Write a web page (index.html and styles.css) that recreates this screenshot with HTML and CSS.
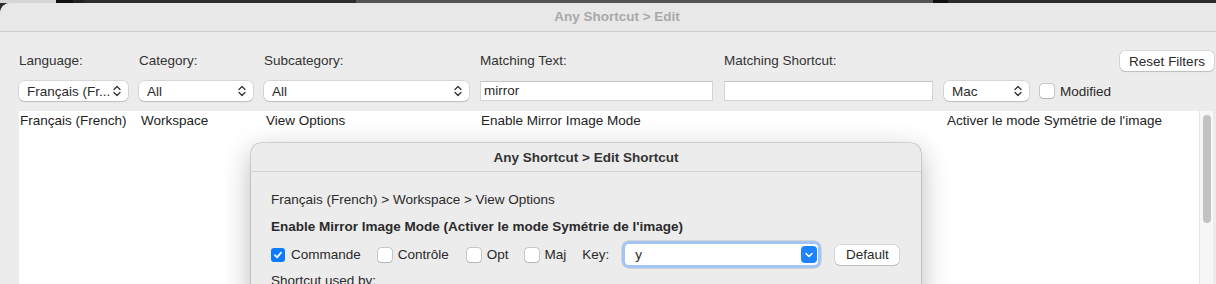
FILE: index.html
```html
<!DOCTYPE html>
<html lang="fr">
<head>
  <meta charset="UTF-8" />
  <title>Any Shortcut &gt; Edit</title>
  <link rel="stylesheet" href="styles.css">
</head>
<body>
  <div class="desktop"></div>

  <div class="window">
    <div class="titlebar">Any Shortcut &gt; Edit</div>

    <div class="filters">
      <div class="row labels">
        <span class="w-lang">Language:</span>
        <span class="w-cat">Category:</span>
        <span class="w-sub">Subcategory:</span>
        <span class="w-text">Matching Text:</span>
        <span class="w-short">Matching Shortcut:</span>
        <button class="btn reset">Reset Filters</button>
      </div>
      <div class="row controls">
        <div class="select w-lang"><span>Français (Fr...</span><svg class="updown" width="8" height="12" viewBox="0 0 8 12"><path d="M1 4.5 4 1.5 7 4.5M1 7.5 4 10.5 7 7.5"/></svg></div>
        <div class="select w-cat"><span>All</span><svg class="updown" width="8" height="12" viewBox="0 0 8 12"><path d="M1 4.5 4 1.5 7 4.5M1 7.5 4 10.5 7 7.5"/></svg></div>
        <div class="select w-sub"><span>All</span><svg class="updown" width="8" height="12" viewBox="0 0 8 12"><path d="M1 4.5 4 1.5 7 4.5M1 7.5 4 10.5 7 7.5"/></svg></div>
        <div class="field w-text">mirror</div>
        <div class="field w-short"></div>
        <div class="select w-mac"><span>Mac</span><svg class="updown" width="8" height="12" viewBox="0 0 8 12"><path d="M1 4.5 4 1.5 7 4.5M1 7.5 4 10.5 7 7.5"/></svg></div>
        <label class="check modified"><span class="box"></span>Modified</label>
      </div>
    </div>

    <div class="table">
      <div class="rows">
        <div class="tr">
          <span class="c1">Français (French)</span>
          <span class="c2">Workspace</span>
          <span class="c3">View Options</span>
          <span class="c4">Enable Mirror Image Mode</span>
          <span class="c5">Activer le mode Symétrie de l'image</span>
        </div>
      </div>
      <div class="scrollbar"><div class="thumb"></div></div>
    </div>
  </div>

  <div class="dialog">
    <div class="dialog-title">Any Shortcut &gt; Edit Shortcut</div>
    <div class="dialog-body">
      <div class="crumb">Français (French) &gt; Workspace &gt; View Options</div>
      <div class="name">Enable Mirror Image Mode (Activer le mode Symétrie de l'image)</div>
      <div class="mods">
        <label class="check cmd"><span class="box on"><svg width="10" height="10" viewBox="0 0 10 10"><path d="M2 5.2 4.1 7.4 8 2.6"/></svg></span>Commande</label>
        <label class="check ctrl"><span class="box"></span>Contrôle</label>
        <label class="check"><span class="box"></span>Opt</label>
        <label class="check"><span class="box"></span>Maj</label>
        <span class="key-label">Key:</span>
        <div class="key">
          <span>y</span>
          <span class="key-btn"><svg width="8" height="6" viewBox="0 0 8 6"><path d="M1 1.5 4 4.5 7 1.5"/></svg></span>
        </div>
        <button class="btn default">Default</button>
      </div>
      <div class="used">Shortcut used by:</div>
    </div>
  </div>
</body>
</html>
```

FILE: styles.css
```css
* {
  box-sizing: border-box;
}

html, body {
  margin: 0;
  height: 284px;
  overflow: hidden;
}

body {
  font-family: "Liberation Sans", Arial, sans-serif;
  font-size: 13.5px;
  color: #2a2a2a;
  background: #2c2c2c;
  position: relative;
}

.desktop {
  height: 3px;
  background: linear-gradient(to right,
    #d6d6d6 0, #d6d6d6 56px,
    #111 56px, #111 73px,
    #222 73px, #222 84px,
    #2d2d2d 84px, #2d2d2d 356px,
    #545454 356px, #545454 933px,
    #111 933px, #111 948px,
    #2b2b2b 948px);
}

.window {
  background: #ececec;
  border-top-left-radius: 10px;
  height: 281px;
}

.titlebar {
  height: 29px;
  border-bottom: 1px solid #cbcbcb;
  background: #e8e8e8;
  border-top-left-radius: 10px;
  text-align: center;
  padding-left: 18px;
  line-height: 28px;
  font-weight: bold;
  color: #a9a9a9;
}

.filters {
  padding: 19px 2px 0 19px;
}

.row {
  display: flex;
  align-items: center;
  height: 20px;
}

.controls {
  margin-top: 10px;
}

.row > * {
  margin-right: 11px;
  flex: none;
}

.labels span {
  line-height: 20px;
  color: #333;
}

.w-lang { width: 109px; }
.w-cat { width: 114px; }
.w-sub { width: 205px; }
.w-text { width: 233px; }
.w-short { width: 209px; }
.w-mac { width: 85px; }

.btn {
  font-family: inherit;
  font-size: 13.5px;
  color: #2a2a2a;
  background: #fff;
  border: none;
  border-radius: 5px;
  box-shadow: 0 0 0 0.5px rgba(0, 0, 0, 0.18), 0 1px 1px rgba(0, 0, 0, 0.12);
  height: 20px;
  padding: 0 9px;
}

.reset {
  margin-left: auto;
  margin-right: 0 !important;
  width: 94px;
  padding: 0;
}

.select {
  height: 20px;
  background: #fff;
  border-radius: 5px;
  box-shadow: 0 0 0 0.5px rgba(0, 0, 0, 0.18), 0 1px 1px rgba(0, 0, 0, 0.12);
  display: flex;
  align-items: center;
  justify-content: space-between;
  padding: 0 7px 0 8px;
  white-space: nowrap;
}

.updown path {
  fill: none;
  stroke: #333;
  stroke-width: 1.3;
  stroke-linecap: round;
  stroke-linejoin: round;
}

.field {
  height: 20px;
  background: #fff;
  border: 1px solid #d4d4d4;
  border-top-color: #c4c4c4;
  padding: 0 3px;
  line-height: 18px;
}

.check {
  display: flex;
  align-items: center;
  gap: 6px;
  white-space: nowrap;
}

.box {
  width: 14px;
  height: 14px;
  border-radius: 3px;
  background: #fff;
  box-shadow: 0 0 0 0.5px rgba(0, 0, 0, 0.3), 0 0.5px 1px rgba(0, 0, 0, 0.1);
  display: flex;
  align-items: center;
  justify-content: center;
}

.box.on {
  background: #0a7aff;
  box-shadow: none;
}

.box.on path {
  fill: none;
  stroke: #fff;
  stroke-width: 1.8;
  stroke-linecap: round;
  stroke-linejoin: round;
}

.table {
  display: flex;
  margin: 10px 3px 0 19px;
  height: 200px;
}

.rows {
  flex: 1;
  background: #fff;
}

.tr {
  display: grid;
  grid-template-columns: 121px 125px 215px 466px auto;
  padding: 2px 0 0 1px;
  line-height: 16px;
  color: #222;
}

.scrollbar {
  width: 14px;
  background: #f7f7f7;
  border-left: 1px solid #e6e6e6;
  padding: 4px 2px 0 3px;
}

.thumb {
  height: 108px;
  border-radius: 4px;
  background: #c2c2c2;
}

.dialog {
  position: absolute;
  left: 251px;
  top: 143px;
  width: 670px;
  height: 200px;
  background: #ececec;
  border-radius: 10px;
  box-shadow: 0 0 0 0.5px rgba(0, 0, 0, 0.25), 0 8px 28px rgba(0, 0, 0, 0.28);
}

.dialog-title {
  height: 29px;
  line-height: 29px;
  text-align: center;
  font-weight: bold;
  color: #333;
  border-bottom: 1px solid #d2d2d2;
}

.dialog-body {
  padding: 18px 20px 0;
}

.crumb, .name, .used {
  line-height: 20px;
}

.name {
  margin-top: 7px;
  font-weight: bold;
}

.mods {
  display: flex;
  align-items: center;
  height: 27px;
  margin-top: 4px;
}

.mods .check {
  margin-right: 16px;
}

.mods .cmd {
  margin-right: 17px;
}

.mods .ctrl {
  margin-right: 18px;
}

.key-label {
  margin-right: 13px;
}

.key {
  width: 199px;
  height: 27px;
  border-radius: 7px;
  background: #fff;
  box-shadow: inset 0 0 0 3px rgba(84, 150, 240, 0.55), 0 0 0 0.5px rgba(0, 0, 0, 0.2);
  display: flex;
  align-items: center;
  justify-content: space-between;
  padding: 0 4px 0 13px;
}

.key-btn {
  width: 16px;
  height: 17px;
  border-radius: 4px;
  background: #1f82ff;
  display: flex;
  align-items: center;
  justify-content: center;
}

.key-btn path {
  fill: none;
  stroke: #fff;
  stroke-width: 1.6;
  stroke-linecap: round;
  stroke-linejoin: round;
}

.default {
  margin-left: 14px;
  width: 64px;
  padding: 0;
}

.used {
  margin-top: 3px;
}
```
